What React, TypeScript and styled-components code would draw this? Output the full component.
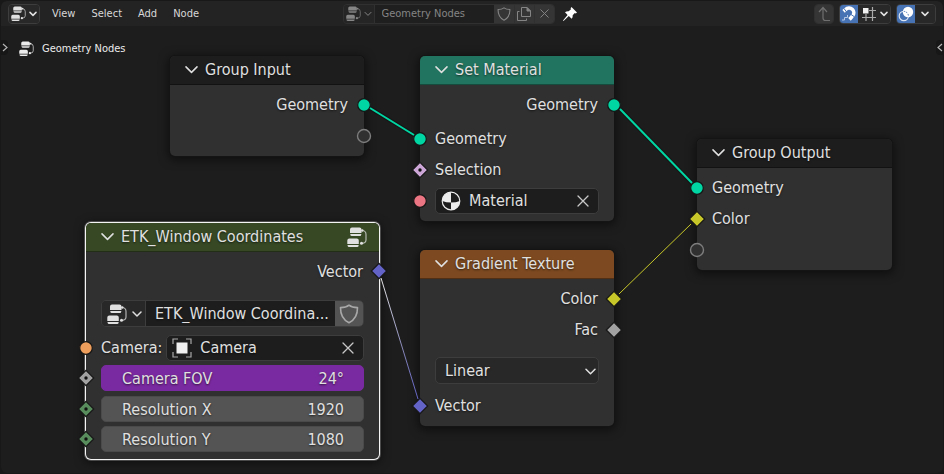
import React from "react";
import styled, { createGlobalStyle, css } from "styled-components";

const Global = createGlobalStyle`
  *, *::before, *::after { box-sizing: border-box; }
  body { margin: 0; background: #181818; }
  body, button, input, select {
    font-family: "DejaVu Sans Condensed", "DejaVu Sans", sans-serif;
  }
  button, input, select { margin: 0; padding: 0; border: 0; background: none; color: inherit; font-size: inherit; }
  input, select { outline: 0; min-width: 0; }
  svg { display: block; flex: none; }
`;

const Editor = styled.div`
  display: flex;
  flex-direction: column;
  min-height: 100vh;
  padding: 1px;
  color: #e0e0e0;
  font-size: 11px;
`;

const Toolbar = styled.header`
  display: grid;
  grid-template-columns: 1fr auto 1fr;
  align-items: center;
  height: 25px;
  padding: 0 7px;
  background: #232323;
  border-radius: 6px 6px 0 0;
`;

const ToolGroup = styled.div<{ $end?: boolean }>`
  display: flex;
  align-items: center;
  gap: 5px;
  justify-content: ${(p) => (p.$end ? "flex-end" : "flex-start")};
`;

const Menus = styled.nav`
  display: flex;
  gap: 16px;
  padding-left: 7px;
`;

const MenuButton = styled.button`
  color: #d8d8d8;
  line-height: 20px;
`;

const CenterGroup = styled.div`
  display: flex;
  align-items: center;
  gap: 7px;
  padding-right: 24px;
`;

const Segments = styled.div<{ $muted?: boolean }>`
  display: flex;
  height: 20px;
  border: 1px solid ${(p) => (p.$muted ? "#303030" : "#3d3d3d")};
  border-radius: 4px;
  overflow: hidden;
  color: ${(p) => (p.$muted ? "#858585" : "#e0e0e0")};
`;

const tones = { dark: "#282828", blue: "#4772b3", gray: "#353535", muted: "#252525" };

const Segment = styled.button<{ $tone: keyof typeof tones; $width: number; $divided?: boolean }>`
  display: flex;
  align-items: center;
  justify-content: center;
  gap: 3px;
  width: ${(p) => p.$width}px;
  background: ${(p) => tones[p.$tone]};
  ${(p) => p.$divided && css`border-left: 1px solid #303030;`}
`;

const DataName = styled.input`
  width: 120px;
  padding-left: 7px;
  background: #1f1f1f;
  border-left: 1px solid #303030;
`;

const PinButton = styled.button`
  display: flex;
  color: #ffffff;
`;

const Canvas = styled.main`
  position: relative;
  flex: 1;
  min-height: 440px;
  background: #1d1d1d;
  border-radius: 0 0 6px 6px;
  overflow: hidden;
`;

const Breadcrumb = styled.div`
  display: flex;
  align-items: center;
  gap: 8px;
  height: 20px;
  margin-top: 12px;
  padding-left: 18px;
  color: #ececec;
`;

const RegionTab = styled.button<{ $side: "left" | "right" }>`
  position: absolute;
  top: 14px;
  ${(p) => p.$side}: 0;
  display: flex;
  align-items: center;
  justify-content: center;
  width: 7px;
  height: 15px;
  background: #171717;
  color: #b5b5b5;
  border-radius: ${(p) => (p.$side === "left" ? "0 4px 4px 0" : "4px 0 0 4px")};
`;

const Links = styled.svg`
  position: absolute;
  top: 0;
  left: 0;
  width: 100%;
  height: 100%;
  pointer-events: none;
`;

const NodeBox = styled.section<{ $x: number; $y: number; $w: number; $selected?: boolean }>`
  position: absolute;
  left: ${(p) => p.$x}px;
  top: ${(p) => p.$y}px;
  width: ${(p) => p.$w}px;
  padding-bottom: 5px;
  background: #303030;
  border-radius: 5px;
  font-size: 16px;
  text-shadow: 0 1px 2px rgba(0, 0, 0, 0.6);
  box-shadow:
    0 0 0 1px ${(p) => (p.$selected ? "#f4f4f4" : "#141414")},
    0 0 0 2px ${(p) => (p.$selected ? "rgba(240, 240, 240, 0.25)" : "transparent")},
    0 2px 10px 2px rgba(0, 0, 0, 0.5);
`;

const NodeTitle = styled.h2<{ $color: string }>`
  display: flex;
  align-items: center;
  height: 29px;
  margin: 0 0 4px;
  padding: 0 12px 1px 15px;
  background: ${(p) => p.$color};
  border-bottom: 1px solid rgba(0, 0, 0, 0.35);
  border-radius: 5px 5px 0 0;
  font-size: 16px;
  font-weight: 400;
  white-space: nowrap;
`;

const TitleText = styled.span`
  flex: 1;
  padding-left: 7px;
`;

const Row = styled.div<{ $end?: boolean; $gap?: number; $compact?: boolean }>`
  position: relative;
  display: flex;
  align-items: center;
  justify-content: ${(p) => (p.$end ? "flex-end" : "flex-start")};
  gap: 4px;
  height: ${(p) => (p.$compact ? 30 : 31)}px;
  margin-top: ${(p) => p.$gap ?? 0}px;
  padding: 0 ${(p) => (p.$end ? 16 : 15)}px 0 15px;
`;

const SocketSlot = styled.svg<{ $side: "in" | "out" }>`
  position: absolute;
  top: calc(50% - 9px);
  ${(p) => (p.$side === "in" ? "left" : "right")}: -9px;
`;

const Field = styled.div`
  display: flex;
  flex: 1;
  align-items: center;
  min-width: 0;
  height: 26px;
  padding: 0 9px 0 5px;
  background: #1d1d1d;
  border: 1px solid #3d3d3d;
  border-radius: 5px;
`;

const FieldInput = styled.input`
  flex: 1;
  padding-left: 8px;
  text-shadow: inherit;
`;

const IconButton = styled.button`
  display: flex;
  color: #c8c8c8;
`;

const GroupField = styled.div`
  display: flex;
  flex: 1;
  min-width: 0;
  height: 27px;
  border: 1px solid #3d3d3d;
  border-radius: 5px;
  overflow: hidden;
`;

const GroupBrowse = styled.button`
  display: flex;
  align-items: center;
  gap: 5px;
  width: 43px;
  padding-left: 5px;
  background: #282828;
`;

const GroupName = styled.input`
  flex: 1;
  padding-left: 9px;
  background: #1d1d1d;
  border-left: 1px solid #3d3d3d;
  text-shadow: inherit;
`;

const GroupShield = styled.button`
  display: flex;
  align-items: center;
  justify-content: center;
  width: 28px;
  background: #545454;
  color: #a8a8a8;
`;

const NumberField = styled.label<{ $driven?: boolean }>`
  display: flex;
  flex: 1;
  align-items: center;
  min-width: 0;
  height: 26px;
  padding: 0 19px 0 20px;
  background: ${(p) => (p.$driven ? "#7a2aa0" : "#545454")};
  border: 1px solid ${(p) => (p.$driven ? "#7a2aa0" : "#4a4a4a")};
  border-radius: 5px;
  white-space: nowrap;
`;

const NumberInput = styled.input`
  flex: 1;
  text-align: right;
  text-shadow: inherit;
`;

const SelectWrap = styled.div`
  position: relative;
  display: flex;
  flex: 1;
  height: 27px;
`;

const Select = styled.select`
  flex: 1;
  appearance: none;
  padding: 0 24px 0 9px;
  background: #282828;
  border: 1px solid #3d3d3d;
  border-radius: 5px;
  text-shadow: inherit;
`;

const SelectArrow = styled.span`
  position: absolute;
  right: 3px;
  top: 9px;
  pointer-events: none;
`;

function NodeTreeIcon({ size }: { size: number }) {
  return (
    <svg width={size} height={size} viewBox="0 0 20 20" aria-hidden="true">
      <g fill="currentColor">
        <path d="M5 .5h7.5a2 2 0 0 1 2 2V6H3V2.500a2 2 0 0 1 2-2z" />
        <path d="M3.300 7h11v.4a1.500 1.500 0 0 1-1.500 1.500H4.800a1.500 1.500 0 0 1-1.500-1.500z" />
        <path d="M2.300 11.500h7.500a2 2 0 0 1 2 2V17H.300v-3.500a2 2 0 0 1 2-2z" />
        <path d="M.600 18h11v.4a1.500 1.500 0 0 1-1.500 1.500H2.100a1.500 1.500 0 0 1-1.500-1.500z" />
        <circle cx="15.300" cy="3.500" r="1.200" />
        <circle cx="14.500" cy="16.300" r="1.500" />
      </g>
      <path d="M15.500 3.500Q19 4 19 7.500V13Q19 16 15 16.300" fill="none" stroke="currentColor" strokeWidth="1.200" opacity=".75" />
    </svg>
  );
}

function Chevron({ width, stroke = 1.5 }: { width: number; stroke?: number }) {
  return (
    <svg width={width} height={width} viewBox={`0 0 ${width} ${width}`} aria-hidden="true">
      <path
        d={`M1 ${width * 0.3}L${width / 2} ${width * 0.3 + width / 2 - 1}L${width - 1} ${width * 0.3}`}
        fill="none"
        stroke="currentColor"
        strokeWidth={stroke}
        strokeLinecap="round"
        strokeLinejoin="round"
      />
    </svg>
  );
}

function SideChevron({ flip }: { flip?: boolean }) {
  return (
    <svg width="6" height="9" viewBox="0 0 6 9" aria-hidden="true">
      <path d={flip ? "M5 1L1 4.500L5 8" : "M1 1L5 4.500L1 8"} fill="none" stroke="currentColor" strokeWidth="1.200" />
    </svg>
  );
}

function ShieldIcon({ size }: { size: number }) {
  return (
    <svg width={size} height={size} viewBox="0 0 20 20" aria-hidden="true">
      <path
        d="M10 1.200C8 2.800 5 3.600 1.500 3.600C1.400 10.500 3 15.500 10 18.800C17 15.500 18.600 10.500 18.500 3.600C15 3.600 12 2.800 10 1.200Z"
        fill="none"
        stroke="currentColor"
        strokeWidth="1.600"
        strokeLinejoin="round"
      />
    </svg>
  );
}

function CloseIcon({ size, stroke = 1.3 }: { size: number; stroke?: number }) {
  return (
    <svg width={size} height={size} viewBox="0 0 12 12" aria-hidden="true">
      <path d="M1 1L11 11M11 1L1 11" stroke="currentColor" strokeWidth={stroke} strokeLinecap="round" />
    </svg>
  );
}

function CopyIcon() {
  return (
    <svg width="16" height="16" viewBox="0 0 16 16" fill="none" stroke="currentColor" aria-hidden="true">
      <path d="M5.500 1.500H11L14.500 5V10.500H5.500Z" />
      <path d="M11 1.500V5H14.500Z" fill="currentColor" />
      <path d="M3.500 5.500H1.500V14.500H10.500V12.500" />
    </svg>
  );
}

function PinIcon() {
  return (
    <svg width="16" height="16" viewBox="0 0 16 16" aria-hidden="true">
      <path
        d="M9.500 1L15 6.500L13.800 7.400L12.800 7L10.700 9.300Q11 11.500 9.600 12.800L6.800 10L1.500 15L1 14.500L5.600 8.900L3 6.200Q4.500 5 6.700 5.200L9 3.300L8.600 2.200Z"
        fill="currentColor"
      />
    </svg>
  );
}

function ParentIcon() {
  return (
    <svg width="16" height="16" viewBox="0 0 16 16" fill="none" stroke="#6f6f6f" strokeWidth="1.200" aria-hidden="true">
      <path d="M3 6L7 1.500L11 6M7 1.500V12Q7 14.500 9.500 14.500H14" />
    </svg>
  );
}

function MagnetIcon() {
  return (
    <svg width="16" height="16" viewBox="0 0 16 16" fill="none" aria-hidden="true">
      <path d="M2.600 5.400L4.600 3.500A4.400 4.400 0 0 1 11.500 10L9.800 11.500" stroke="#fff" strokeWidth="3.600" />
      <path d="M3 2.500L6 6.600M13 10.500L9 7.800" stroke="#4772b3" strokeWidth="1" />
      <path d="M8.300 11L10.800 13.600" stroke="#fff" strokeWidth="3" />
      <path d="M6.500 9V11.500H3.500V14H1" stroke="#b9cae6" />
    </svg>
  );
}

function SnapGridIcon() {
  return (
    <svg width="16" height="16" viewBox="0 0 16 16" fill="none" aria-hidden="true">
      <path d="M5 8V15M11.500 1V15M1 11.500H15M8 4.500H15" stroke="#a9a9a9" strokeWidth="1.200" />
      <rect x="2" y="2" width="5.500" height="5.500" fill="#f0f0f0" />
    </svg>
  );
}

function OverlayIcon() {
  return (
    <svg width="16" height="16" viewBox="0 0 16 16" fill="none" aria-hidden="true">
      <circle cx="5.800" cy="10" r="4.600" stroke="#dde6f4" strokeWidth="1.200" />
      <circle cx="10" cy="6" r="5.200" fill="#fff" />
      <path d="M5.800 5.400A4.600 4.600 0 0 1 10.400 10" stroke="#4772b3" strokeDasharray="1.500 1" />
    </svg>
  );
}

function MaterialIcon() {
  return (
    <svg width="20" height="20" viewBox="0 0 20 20" aria-hidden="true">
      <circle cx="10" cy="10" r="8.800" fill="#1d1d1d" stroke="#ececec" strokeWidth="1.200" />
      <path d="M10 10V1.200A8.800 8.800 0 0 0 1.200 10Q5 11.500 10 11.500Z" fill="#ececec" />
      <path d="M10 11.500Q15 11.500 18.800 10A8.800 8.800 0 0 1 10 18.800Z" fill="#ececec" />
    </svg>
  );
}

function ObjectIcon() {
  return (
    <svg width="20" height="20" viewBox="0 0 20 20" aria-hidden="true">
      <rect x="4.500" y="4.500" width="11" height="11" fill="#f0f0f0" />
      <path d="M6 1H1V6M14 1H19V6M6 19H1V14M14 19H19V14" fill="none" stroke="#a9a9a9" strokeWidth="1.200" />
    </svg>
  );
}

type SocketProps = { side: "in" | "out"; color: string; shape?: "circle" | "diamond" | "field" | "empty" };

function Socket({ side, color, shape = "circle" }: SocketProps) {
  return (
    <SocketSlot $side={side} width="18" height="18" viewBox="0 0 18 18" aria-hidden="true">
      {shape === "circle" && <circle cx="9" cy="9" r="6.300" fill={color} stroke="#161616" strokeWidth="1.200" />}
      {shape === "empty" && <circle cx="9" cy="9" r="6.500" fill="#303030" stroke={color} strokeWidth="1.400" />}
      {(shape === "diamond" || shape === "field") && (
        <path d="M9 1.300L16.700 9L9 16.700L1.300 9Z" fill={color} stroke="#161616" strokeWidth="1.200" />
      )}
      {shape === "field" && <circle cx="9" cy="9" r="1.700" fill="#111" />}
    </SocketSlot>
  );
}

type NodeProps = {
  title: string;
  color: string;
  x: number;
  y: number;
  width?: number;
  selected?: boolean;
  badge?: React.ReactNode;
  children: React.ReactNode;
};

function Node({ title, color, x, y, width = 194, selected, badge, children }: NodeProps) {
  return (
    <NodeBox $x={x} $y={y} $w={width} $selected={selected}>
      <NodeTitle $color={color}>
        <Chevron width={13} />
        <TitleText>{title}</TitleText>
        {badge}
      </NodeTitle>
      {children}
    </NodeBox>
  );
}

const GREEN = "#00d6a3";
const YELLOW = "#c7c729";
const VIOLET = "#6363c7";
const GRAY = "#a1a1a1";
const INTEGER = "#598c5c";

export default function App() {
  return (
    <Editor>
      <Global />
      <Toolbar>
        <ToolGroup>
          <Segments>
            <Segment $tone="dark" $width={30} aria-label="Editor type">
              <NodeTreeIcon size={15} />
              <Chevron width={8} />
            </Segment>
          </Segments>
          <Menus>
            {["View", "Select", "Add", "Node"].map((name) => (
              <MenuButton key={name}>{name}</MenuButton>
            ))}
          </Menus>
        </ToolGroup>
        <CenterGroup>
          <Segments $muted>
            <Segment $tone="muted" $width={30} aria-label="Browse node trees">
              <NodeTreeIcon size={15} />
              <Chevron width={8} stroke={1} />
            </Segment>
            <DataName aria-label="Node tree name" defaultValue="Geometry Nodes" />
            <Segment $tone="gray" $width={20} aria-label="Fake user">
              <ShieldIcon size={14} />
            </Segment>
            <Segment $tone="gray" $width={20} $divided aria-label="Duplicate">
              <CopyIcon />
            </Segment>
            <Segment $tone="gray" $width={20} $divided aria-label="Unlink">
              <CloseIcon size={9} />
            </Segment>
          </Segments>
          <PinButton aria-label="Pin">
            <PinIcon />
          </PinButton>
        </CenterGroup>
        <ToolGroup $end>
          <Segments $muted>
            <Segment $tone="gray" $width={18} aria-label="Parent node tree">
              <ParentIcon />
            </Segment>
          </Segments>
          <Segments>
            <Segment $tone="blue" $width={18} aria-label="Snap">
              <MagnetIcon />
            </Segment>
            <Segment $tone="dark" $width={32} aria-label="Snap to grid">
              <SnapGridIcon />
              <Chevron width={8} />
            </Segment>
          </Segments>
          <Segments>
            <Segment $tone="blue" $width={18} aria-label="Show overlays">
              <OverlayIcon />
            </Segment>
            <Segment $tone="dark" $width={20} aria-label="Overlay options">
              <Chevron width={8} />
            </Segment>
          </Segments>
        </ToolGroup>
      </Toolbar>

      <Canvas>
        <Breadcrumb>
          <NodeTreeIcon size={15} />
          <span>Geometry Nodes</span>
        </Breadcrumb>
        <RegionTab $side="left" aria-label="Open toolbar">
          <SideChevron />
        </RegionTab>
        <RegionTab $side="right" aria-label="Open sidebar">
          <SideChevron flip />
        </RegionTab>

        <Node title="Group Input" color="#1d1d1d" x={169} y={30}>
          <Row $end>
            Geometry
            <Socket side="out" color={GREEN} />
          </Row>
          <Row>
            <Socket side="out" color="#7d7d7d" shape="empty" />
          </Row>
        </Node>

        <Node title="Set Material" color="#21745f" x={419} y={30}>
          <Row $end>
            Geometry
            <Socket side="out" color={GREEN} />
          </Row>
          <Row $gap={3}>
            <Socket side="in" color={GREEN} />
            Geometry
          </Row>
          <Row>
            <Socket side="in" color="#cca6d6" shape="field" />
            Selection
          </Row>
          <Row>
            <Socket side="in" color="#eb7582" />
            <Field>
              <MaterialIcon />
              <FieldInput aria-label="Material" defaultValue="Material" />
              <IconButton aria-label="Clear material">
                <CloseIcon size={12} />
              </IconButton>
            </Field>
          </Row>
        </Node>

        <Node title="Gradient Texture" color="#7c4920" x={419} y={224}>
          <Row $end>
            Color
            <Socket side="out" color={YELLOW} shape="diamond" />
          </Row>
          <Row $end>
            Fac
            <Socket side="out" color={GRAY} shape="diamond" />
          </Row>
          <Row $gap={10}>
            <SelectWrap>
              <Select aria-label="Gradient type" defaultValue="Linear">
                <option>Linear</option>
              </Select>
              <SelectArrow>
                <Chevron width={11} />
              </SelectArrow>
            </SelectWrap>
          </Row>
          <Row $gap={4}>
            <Socket side="in" color={VIOLET} shape="diamond" />
            Vector
          </Row>
        </Node>

        <Node title="Group Output" color="#1d1d1d" x={696} y={113} width={195}>
          <Row>
            <Socket side="in" color={GREEN} />
            Geometry
          </Row>
          <Row>
            <Socket side="in" color={YELLOW} shape="diamond" />
            Color
          </Row>
          <Row>
            <Socket side="in" color="#7d7d7d" shape="empty" />
          </Row>
        </Node>

        <Node
          title="ETK_Window Coordinates"
          color="#364824"
          x={85}
          y={197}
          width={293}
          selected
          badge={<NodeTreeIcon size={20} />}
        >
          <Row $end $compact>
            Vector
            <Socket side="out" color={VIOLET} shape="diamond" />
          </Row>
          <Row $gap={12}>
            <GroupField>
              <GroupBrowse aria-label="Browse node groups">
                <NodeTreeIcon size={20} />
                <Chevron width={10} />
              </GroupBrowse>
              <GroupName aria-label="Node group" defaultValue="ETK_Window Coordina..." />
              <GroupShield aria-label="Fake user">
                <ShieldIcon size={20} />
              </GroupShield>
            </GroupField>
          </Row>
          <Row $gap={3}>
            <Socket side="in" color="#ed9e5c" />
            <label htmlFor="camera">Camera:</label>
            <Field>
              <ObjectIcon />
              <FieldInput id="camera" defaultValue="Camera" />
              <IconButton aria-label="Clear camera">
                <CloseIcon size={12} />
              </IconButton>
            </Field>
          </Row>
          <Row $compact>
            <Socket side="in" color={GRAY} shape="field" />
            <NumberField $driven>
              Camera FOV
              <NumberInput defaultValue="24°" />
            </NumberField>
          </Row>
          <Row $compact $gap={1}>
            <Socket side="in" color={INTEGER} shape="field" />
            <NumberField>
              Resolution X
              <NumberInput defaultValue="1920" />
            </NumberField>
          </Row>
          <Row $compact>
            <Socket side="in" color={INTEGER} shape="field" />
            <NumberField>
              Resolution Y
              <NumberInput defaultValue="1080" />
            </NumberField>
          </Row>
        </Node>

        <Links aria-hidden="true">
          <defs>
            <linearGradient id="vectorLink" x1="0" y1="0" x2="0" y2="1">
              <stop offset="0" stopColor="#e8e8e8" />
              <stop offset=".6" stopColor="#8585b8" />
              <stop offset="1" stopColor={VIOLET} />
            </linearGradient>
          </defs>
          <g stroke="#111" strokeWidth="4" opacity=".6">
            <path d="M369 82L413 109" />
            <path d="M619 83L691 157" />
          </g>
          <g stroke={GREEN} strokeWidth="2">
            <path d="M369 82L413 109" />
            <path d="M619 83L691 157" />
          </g>
          <path d="M618 268L690 198" stroke={YELLOW} strokeWidth="1" />
          <path d="M380 252L417 373" stroke="url(#vectorLink)" strokeWidth="1" />
        </Links>
      </Canvas>
    </Editor>
  );
}
